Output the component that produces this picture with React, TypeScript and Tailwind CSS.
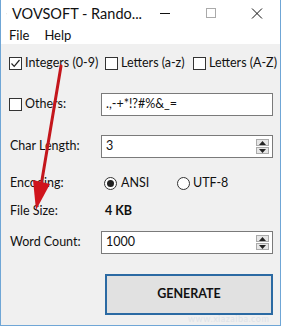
import React from 'react';

const font = { fontFamily: 'Lato, "Noto Sans", sans-serif' };

const CheckBox = ({ checked }: { checked?: boolean }) => (
  <span className="w-[13px] h-[13px] border border-[#333] bg-white flex items-center justify-center shrink-0">
    {checked && (
      <svg width="11" height="11" viewBox="0 0 11 11">
        <path d="M1.5 5.5 L4.2 8.3 L9.5 2" fill="none" stroke="#222" strokeWidth="1.2" />
      </svg>
    )}
  </span>
);

const Radio = ({ checked }: { checked?: boolean }) => (
  <span className="w-[13px] h-[13px] rounded-full border border-[#333] bg-white flex items-center justify-center shrink-0">
    {checked && <span className="w-[7px] h-[7px] rounded-full bg-[#222]" />}
  </span>
);

const Spinner = () => (
  <div className="flex flex-col gap-[1px] mr-[3px]">
    <span className="w-[13px] h-[7px] bg-[#e6e6e6] border border-[#aaa] flex items-center justify-center">
      <svg width="7" height="4" viewBox="0 0 7 4"><path d="M0 4 L3.5 0 L7 4Z" fill="#222" /></svg>
    </span>
    <span className="w-[13px] h-[7px] bg-[#e6e6e6] border border-[#aaa] flex items-center justify-center">
      <svg width="7" height="4" viewBox="0 0 7 4"><path d="M0 0 L3.5 4 L7 0Z" fill="#222" /></svg>
    </span>
  </div>
);

const Field = ({ value, spin }: { value: string; spin?: boolean }) => (
  <div className="ml-auto mr-[7px] w-[172px] h-[23px] bg-white border border-[#7a7a7a] flex items-center pl-[4px]">
    <span className="flex-1 text-[12.5px] text-[#111] whitespace-nowrap">{value}</span>
    {spin && <Spinner />}
  </div>
);

export default function App() {
  return (
    <div className="relative w-[282px] h-[328px] overflow-hidden bg-white whitespace-nowrap" style={font}>
      <div className="w-[281px] h-[326px] border-x border-b border-[#6fa6d6] bg-[#f0f0f0] flex flex-col">
        {/* title bar */}
        <div className="h-[27px] bg-white flex items-center">
          <svg className="ml-[5px]" width="16" height="16" viewBox="0 0 16 16">
            <rect x="1.5" y="2.5" width="10" height="12" fill="#fff" stroke="#666" />
            <path d="M3.5 5.5h6M3.5 8h6M3.5 10.5h4" stroke="#888" />
            <path d="M9 9 L15 3 L15 9Z" fill="#d89a2a" />
          </svg>
          <span className="ml-[5px] text-[14.5px] text-[#111]">VOVSOFT - Rando...</span>
          <div className="ml-auto flex items-center">
            <svg width="46" height="27" viewBox="0 0 46 27"><path d="M18 13.5h10" stroke="#111" /></svg>
            <svg width="46" height="27" viewBox="0 0 46 27"><rect x="18.5" y="8.5" width="9" height="9" fill="none" stroke="#aaa" /></svg>
            <svg width="46" height="27" viewBox="0 0 46 27"><path d="M18 8.5l10 10M28 8.5l-10 10" stroke="#111" /></svg>
          </div>
        </div>
        {/* menu bar */}
        <div className="h-[17px] bg-white flex items-center text-[13px] text-[#111]">
          <span className="ml-[8px]">File</span>
          <span className="ml-[15px]">Help</span>
        </div>

        <div className="flex flex-col pl-[8px] text-[12.5px] text-[#111]">
          <div className="mt-[10px] h-[18px] flex items-center">
            <CheckBox checked />
            <span className="ml-[3px] w-[80px]">Integers (0-9)</span>
            <CheckBox />
            <span className="ml-[3px] w-[72px]">Letters (a-z)</span>
            <CheckBox />
            <span className="ml-[3px]">Letters (A-Z)</span>
          </div>

          <div className="mt-[21px] h-[23px] flex items-center">
            <CheckBox />
            <span className="ml-[3px]">Others:</span>
            <Field value=".,-+*!?#%&_=" />
          </div>

          <div className="mt-[19px] h-[23px] flex items-center">
            <span className="ml-[1px]">Char Length:</span>
            <Field value="3" spin />
          </div>

          <div className="mt-[15px] h-[20px] flex items-center">
            <span className="ml-[1px] w-[94px]">Encoding:</span>
            <Radio checked />
            <span className="ml-[4px] w-[56px]">ANSI</span>
            <Radio />
            <span className="ml-[3px]">UTF-8</span>
          </div>

          <div className="mt-[9px] h-[18px] flex items-center">
            <span className="ml-[1px] w-[95px]">File Size:</span>
            <span className="font-bold">4 KB</span>
          </div>

          <div className="mt-[11px] h-[23px] flex items-center">
            <span className="ml-[1px]">Word Count:</span>
            <Field value="1000" spin />
          </div>

          <div className="mt-[20px] ml-[96px] w-[168px] h-[41px] border-2 border-[#2b6aa3] bg-[#e1e1e1] flex items-center justify-center">
            <span className="font-bold text-[12.5px] text-[#111]">GENERATE</span>
          </div>
        </div>
      </div>

      {/* red annotation arrow */}
      <svg className="absolute left-0 top-0 pointer-events-none" width="282" height="328" viewBox="0 0 282 328">
        <path d="M61 66 L41 186" stroke="#c4161c" strokeWidth="3" strokeLinecap="round" />
        <path d="M33 180 L50 184 L36 210Z" fill="#d0141c" />
      </svg>

      {/* watermark */}
      <span className="absolute left-[188px] top-[312px] text-[9px] tracking-[0.5px] text-[#d6dde6] opacity-70">www.xiazaiba.com</span>
    </div>
  );
}
